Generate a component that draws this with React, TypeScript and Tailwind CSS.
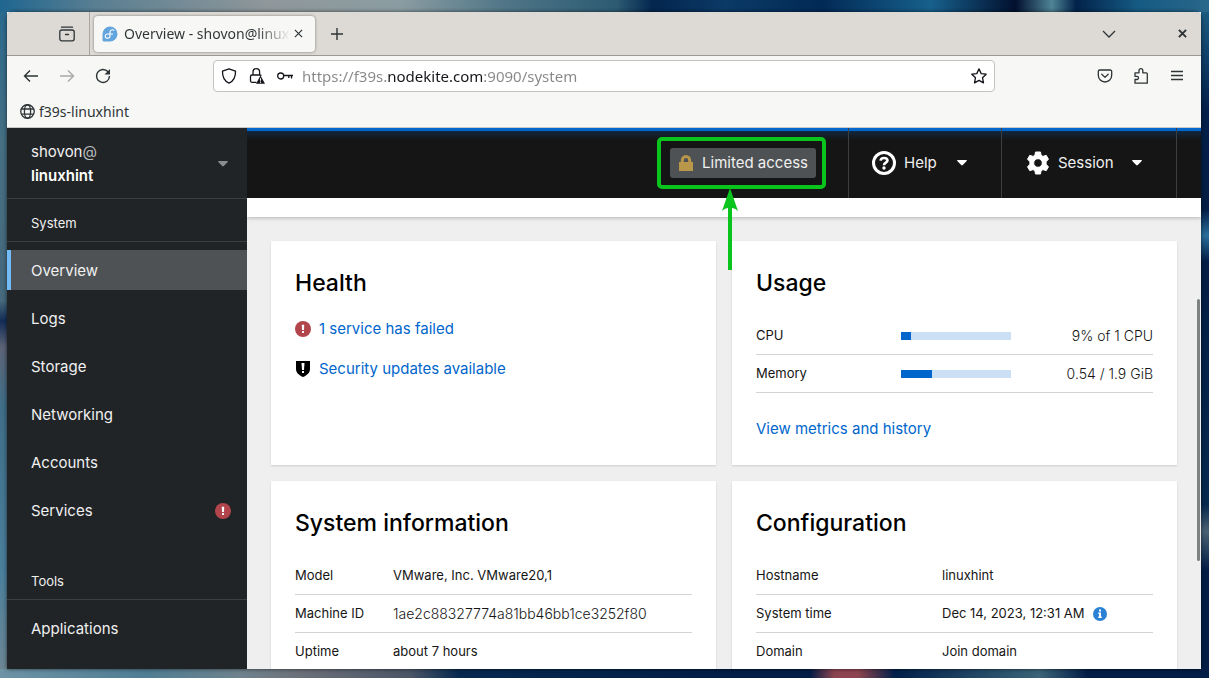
import type { ReactNode } from "react";

const navItems = ["Overview", "Logs", "Storage", "Networking", "Accounts", "Services"];

const usage = [
  { label: "CPU", percent: 9, value: "9% of 1 CPU" },
  { label: "Memory", percent: 28, value: "0.54 / 1.9 GiB" },
];

function ErrorIcon() {
  return (
    <svg viewBox="0 0 16 16" className="size-4 shrink-0" aria-hidden="true">
      <circle cx="8" cy="8" r="8" fill="#b1454b" />
      <path d="M6.8 3.8h2.4L9 9H7z" fill="#fff" />
      <rect x="7" y="10" width="2" height="2" fill="#fff" />
    </svg>
  );
}

function Caret({ className }: { className: string }) {
  return (
    <svg viewBox="0 0 10 6" className={`w-[10px] h-[6px] ${className}`} fill="currentColor" aria-hidden="true">
      <path d="M.7 0h8.6q1 .3.4 1.1L5.8 5q-.8.8-1.6 0L.3 1.1Q-.3.3.7 0z" />
    </svg>
  );
}

function TabBar() {
  return (
    <div className="flex h-11 items-center border-b border-[#9a9892] bg-[#dddad5] text-[#2e3436]">
      <div className="flex h-full w-[83px] items-center justify-end border-r border-[#a9a6a1] pr-[14px]">
        <button type="button" aria-label="Firefox View">
          <svg viewBox="0 0 16 16" className="size-4" fill="none" stroke="currentColor" strokeWidth="1.3" strokeLinecap="round">
            <path d="M2.5 1.2h11" />
            <rect x=".8" y="4" width="14.4" height="10.8" rx="2" />
            <path d="M6.5 8.5h3" />
          </svg>
        </button>
      </div>
      <div className="ml-1 flex h-9 w-[221px] items-center rounded bg-[#f7f7f5] pl-2 pr-3 shadow-[0_0_3px_rgba(0,0,0,0.45)]">
        <svg viewBox="0 0 16 16" className="size-4 shrink-0" aria-hidden="true">
          <path d="M8 .5A7.5 7.5 0 0 0 .5 8v6a1.5 1.5 0 0 0 1.5 1.5h6a7.5 7.5 0 0 0 0-15z" fill="#62a5de" />
          <path
            d="M11.8 4.2C9.8 3.2 8 4.3 8 6.3v3.4c0 3.4-4.8 3.2-4.8.4 0-1.7 1.5-2.2 2.6-2.1M5.8 8h4.7"
            fill="none"
            stroke="#fff"
            strokeWidth="1.1"
            strokeLinecap="round"
          />
        </svg>
        <span className="ml-[6px] flex-1 whitespace-nowrap bg-linear-to-r from-[#2e3436] from-80% to-transparent bg-clip-text text-sm text-transparent">
          Overview - shovon@linux
        </span>
        <button type="button" aria-label="Close tab" className="ml-1">
          <svg viewBox="0 0 10 10" className="size-[9px]" stroke="currentColor" strokeWidth="1.3">
            <path d="M1 1l8 8M9 1L1 9" />
          </svg>
        </button>
      </div>
      <button type="button" aria-label="New tab" className="ml-4">
        <svg viewBox="0 0 12 12" className="size-3" stroke="currentColor" strokeWidth="1.4">
          <path d="M6 0v12M0 6h12" />
        </svg>
      </button>
      <div className="ml-auto flex items-center gap-[62px] pr-[14px]">
        <button type="button" aria-label="List all tabs">
          <svg viewBox="0 0 14 8" className="h-2 w-[14px]" fill="none" stroke="currentColor" strokeWidth="1.3">
            <path d="M1 1l6 6 6-6" />
          </svg>
        </button>
        <button type="button" aria-label="Close window">
          <svg viewBox="0 0 10 10" className="size-[9px]" stroke="currentColor" strokeWidth="2.2">
            <path d="M1 1l8 8M9 1L1 9" />
          </svg>
        </button>
      </div>
    </div>
  );
}

function Toolbar() {
  return (
    <div className="grid grid-cols-[206px_1fr_206px] items-center pt-1 text-[#2e3436]">
      <div className="flex items-center gap-5 pl-4">
        <button type="button" aria-label="Back">
          <svg viewBox="0 0 16 16" className="size-4" fill="none" stroke="currentColor" strokeWidth="1.4">
            <path d="M15 8H2M7 2.5L1.5 8 7 13.5" />
          </svg>
        </button>
        <button type="button" aria-label="Forward" disabled className="text-[#a8a9a9]">
          <svg viewBox="0 0 16 16" className="size-4" fill="none" stroke="currentColor" strokeWidth="1.4">
            <path d="M1 8h13M9 2.5L14.5 8 9 13.5" />
          </svg>
        </button>
        <button type="button" aria-label="Reload">
          <svg viewBox="0 0 16 16" className="size-4" fill="none" stroke="currentColor" strokeWidth="1.4">
            <path d="M13 3.8A6.5 6.5 0 1 0 14.5 8" />
            <path d="M15 1v5.5H9.5z" fill="currentColor" stroke="none" />
          </svg>
        </button>
      </div>
      <div className="flex h-8 items-center rounded border border-[#c6c3be] bg-white px-[7px]">
        <svg viewBox="0 0 16 16" className="size-4 shrink-0" fill="none" stroke="#15141a" strokeWidth="1.3" strokeLinejoin="round">
          <path d="M8 .8L14.5 3.2C14.7 8.5 12.5 13 8 15.2 3.5 13 1.3 8.5 1.5 3.2z" />
        </svg>
        <svg viewBox="0 0 16 16" className="ml-3 size-4 shrink-0" fill="none" stroke="#15141a" strokeWidth="1.3">
          <path d="M4 7V4a3.3 3.3 0 0 1 6.6 0v3M7.5 14.3H3a1.5 1.5 0 0 1-1.5-1.5V8.5A1.5 1.5 0 0 1 3 7h8a1.5 1.5 0 0 1 1.3.8" />
          <path d="M11.5 7.5L16 15.8H7z" fill="#15141a" stroke="none" />
          <path d="M11.5 10.2v2.5M11.5 13.5v1.2" stroke="#fff" strokeWidth="1.1" />
        </svg>
        <svg viewBox="0 0 16 16" className="ml-3 size-4 shrink-0" fill="none" stroke="#15141a" strokeWidth="1.3">
          <circle cx="3.7" cy="8" r="3" />
          <path d="M6.7 7.5h9.3M11.8 7.5v2.5M14.5 7.5v3" />
        </svg>
        <input
          type="text"
          aria-label="Address"
          defaultValue="https://f39s.nodekite.com:9090/system"
          className="ml-[9px] min-w-0 flex-1 bg-[linear-gradient(to_right,#87878a_84px,#15141a_84px,#15141a_180px,#87878a_180px)] bg-clip-text text-[15px] text-transparent outline-none"
        />
        <button type="button" aria-label="Bookmark this page">
          <svg viewBox="0 0 16 16" className="size-4" fill="none" stroke="#15141a" strokeWidth="1.3" strokeLinejoin="round">
            <path d="M8 .9l2.2 4.7 5 .6-3.7 3.5 1 5.2L8 12.4l-4.5 2.5 1-5.2L.8 6.2l5-.6z" />
          </svg>
        </button>
      </div>
      <div className="flex items-center justify-end gap-5 pr-4">
        <button type="button" aria-label="Save to Pocket">
          <svg viewBox="0 0 16 16" className="size-4" fill="none" stroke="currentColor" strokeWidth="1.3" strokeLinejoin="round">
            <path d="M2.8 2h10.4a1.5 1.5 0 0 1 1.5 1.5V7.3a6.7 6.7 0 0 1-13.4 0V3.5A1.5 1.5 0 0 1 2.8 2z" />
            <path d="M4.8 6.3L8 9.4l3.2-3.1" strokeLinecap="round" />
          </svg>
        </button>
        <button type="button" aria-label="Extensions">
          <svg viewBox="0 0 16 16" className="size-4" fill="none" stroke="currentColor" strokeWidth="1.3" strokeLinejoin="round">
            <path d="M2 4.8h4V2.6a1.9 1.9 0 0 1 3.8 0v2.2h3.5a1 1 0 0 1 1 1v9.4H2v-3.7h1.9a1.6 1.6 0 0 0 0-3.2H2z" />
          </svg>
        </button>
        <button type="button" aria-label="Open application menu">
          <svg viewBox="0 0 16 16" className="size-4" stroke="currentColor" strokeWidth="1.3">
            <path d="M2 3.5h12M2 7.5h12M2 11.5h12" />
          </svg>
        </button>
      </div>
    </div>
  );
}

function Sidebar() {
  return (
    <nav className="w-60 shrink-0 bg-[#212427] text-[15px] text-[#f0f0f0]">
      <button
        type="button"
        className="flex h-[71px] w-full items-center justify-between border-b border-[#3c3f42] pt-0.5 pl-6 pr-[19px] text-left"
      >
        <span className="leading-6">
          shovon<span className="text-[#b8bbbe]">@</span>
          <br />
          <span className="font-semibold text-white">linuxhint</span>
        </span>
        <Caret className="text-[#8a8d90]" />
      </button>
      <h2 className="flex h-[43px] items-end border-b border-[#3c3f42] px-6 pb-2 text-[13px] leading-5">System</h2>
      <ul className="mt-2 flex flex-col gap-2">
        {navItems.map((item) => (
          <li key={item}>
            <a
              href="#"
              className={
                item === "Overview"
                  ? "flex h-10 items-center border-l-4 border-[#73bcf7] bg-[#4f5255] pt-0.5 pl-5"
                  : "flex h-10 items-center justify-between pt-0.5 pl-6 pr-4"
              }
            >
              {item}
              {item === "Services" && <ErrorIcon />}
            </a>
          </li>
        ))}
      </ul>
      <h2 className="mt-[27px] flex h-[43px] items-end border-b border-[#3c3f42] px-6 pb-2 text-[13px] leading-5">Tools</h2>
      <ul className="mt-2">
        <li>
          <a href="#" className="flex h-10 items-center px-6 pt-0.5">
            Applications
          </a>
        </li>
      </ul>
    </nav>
  );
}

function Masthead() {
  return (
    <header className="relative z-10 flex h-[70px] shrink-0 justify-end bg-[#151515] pr-6 text-[15px] text-[#f0f0f0]">
      {/* page loading bar */}
      <div className="absolute inset-x-0 top-0 h-3 border-t-[3px] border-[#0066cc] bg-linear-to-b from-[#0e2740] to-[#151515]" />
      <div className="relative mr-8 flex items-center">
        <button
          type="button"
          className="flex h-[30px] items-center gap-2 rounded-[3px] bg-[#4f5255] px-2 whitespace-nowrap"
        >
          <svg viewBox="0 0 16 16" className="size-4" aria-hidden="true">
            <path d="M1 7h1.8V5.2a5.2 5.2 0 0 1 10.4 0V7H15v9H1zm4.8 0h4.4V5.2a2.2 2.2 0 0 0-4.4 0z" fill="#b8974a" fillRule="evenodd" />
          </svg>
          Limited access
        </button>
        {/* highlight around the access button */}
        <div className="absolute -left-[13px] -right-[10px] top-[9px] h-[52px] rounded-[5px] border-4 border-[#08c41c]" />
        <svg viewBox="0 0 16 82" className="absolute left-[52px] top-[60px] h-[82px] w-4" fill="#08c41c">
          <path d="M8 0L16 23Q13 20 10 20V82H6V20Q3 20 0 23z" />
        </svg>
      </div>
      <button type="button" className="relative flex w-[153px] items-center border-l border-[#3c3f42] pl-[23px]">
        <svg viewBox="0 0 24 24" className="size-6" fill="none" stroke="#fff" strokeWidth="3">
          <circle cx="12" cy="12" r="10.5" />
          <path d="M8.6 9.6C8.8 7.8 10.2 7 12 7c2 0 3.4 1 3.4 2.6 0 2.2-3.4 2.1-3.4 4.6" strokeWidth="2.7" />
          <circle cx="12" cy="17" r="1.7" fill="#fff" stroke="none" />
        </svg>
        <span className="ml-2">Help</span>
        <Caret className="ml-auto mr-[34px] text-white" />
      </button>
      <button type="button" className="relative flex w-[176px] items-center border-x border-[#3c3f42] pl-6">
        <svg viewBox="0 0 24 24" className="size-6" fill="#fff" stroke="#fff" strokeLinejoin="round">
          <path
            fillRule="evenodd"
            d="M9.5 1h5l.6 3.3 1.9 1.1 3.2-1.1 2.3 4-2.4 2.3v2.8l2.4 2.3-2.3 4-3.2-1.1-1.9 1.1-.6 3.3h-5l-.6-3.3L7 18.600l-3.2 1.100-2.300-4 2.400-2.300v-2.800L1.500 8.300l2.300-4L7 5.400l1.900-1.100zM12 7.700a4.300 4.300 0 1 0 0 8.600 4.300 4.300 0 0 0 0-8.600z"
          />
        </svg>
        <span className="ml-2">Session</span>
        <Caret className="ml-auto mr-[34px] text-white" />
      </button>
    </header>
  );
}

function Card({ title, children }: { title: string; children: ReactNode }) {
  return (
    <section className="bg-white p-6 shadow-[0_1px_2px_rgba(0,0,0,0.15)]">
      <h2 className="mb-4 text-[23px] leading-9 font-medium text-black">{title}</h2>
      {children}
    </section>
  );
}

function Row({ label, children }: { label: string; children: ReactNode }) {
  return (
    <tr className="h-[38px] *:border-b *:border-[#d2d2d2]">
      <th scope="row" className="p-0 text-left font-normal">
        {label}
      </th>
      {children}
    </tr>
  );
}

function Overview() {
  return (
    <main className="relative flex-1 overflow-hidden bg-[#efefef]">
      <div className="mb-6 h-[19px] bg-white shadow-[0_1px_4px_rgba(0,0,0,0.25)]" />
      <div className="grid grid-cols-2 gap-4 px-6">
        <Card title="Health">
          <ul className="flex flex-col gap-4 text-[15px] leading-6 text-[#0066cc]">
            <li className="flex items-center gap-2">
              <ErrorIcon />
              <a href="#">1 service has failed</a>
            </li>
            <li className="flex items-center gap-2">
              <svg viewBox="0 0 16 16" className="size-4 shrink-0" aria-hidden="true">
                <path d="M1 0h14v8c0 4-3.5 6.5-7 8-3.5-1.5-7-4-7-8z" fill="#000" />
                <path d="M6.5 2h3L9 9H7z" fill="#fff" />
                <rect x="7" y="10" width="2" height="2" fill="#fff" />
              </svg>
              <a href="#">Security updates available</a>
            </li>
          </ul>
        </Card>

        <Card title="Usage">
          <table className="w-full table-fixed border-separate border-spacing-0 text-[13px]">
            <colgroup>
              <col className="w-[145px]" />
              <col className="w-[110px]" />
              <col />
            </colgroup>
            <tbody>
              {usage.map((row) => (
                <Row key={row.label} label={row.label}>
                  <td className="p-0">
                    <div role="progressbar" aria-label={row.label} aria-valuenow={row.percent} className="h-2 bg-[#cce0f5]">
                      <div className="h-full bg-[#0066cc]" style={{ width: `${row.percent}%` }} />
                    </div>
                  </td>
                  <td className="p-0 text-right text-sm font-light">{row.value}</td>
                </Row>
              ))}
            </tbody>
          </table>
          <a href="#" className="mt-6 block text-[15px] leading-6 text-[#0066cc]">
            View metrics and history
          </a>
        </Card>

        <Card title="System information">
          <table className="w-full table-fixed border-separate border-spacing-0 text-[13px]">
            <colgroup>
              <col className="w-[98px]" />
              <col />
            </colgroup>
            <tbody>
              <Row label="Model">
                <td className="p-0">VMware, Inc. VMware20,1</td>
              </Row>
              <Row label="Machine ID">
                <td className="p-0 text-sm font-light">1ae2c88327774a81bb46bb1ce3252f80</td>
              </Row>
              <Row label="Uptime">
                <td className="p-0">about 7 hours</td>
              </Row>
            </tbody>
          </table>
        </Card>

        <Card title="Configuration">
          <table className="w-full table-fixed border-separate border-spacing-0 text-[13px]">
            <colgroup>
              <col className="w-[186px]" />
              <col />
            </colgroup>
            <tbody>
              <Row label="Hostname">
                <td className="p-0">linuxhint</td>
              </Row>
              <Row label="System time">
                <td className="p-0">
                  <span className="flex items-center gap-2">
                    Dec 14, 2023, 12:31 AM
                    <svg viewBox="0 0 14 14" className="size-[14px]" aria-hidden="true">
                      <circle cx="7" cy="7" r="7" fill="#2b82d4" />
                      <path d="M6 2.5h2v2H6zM5.3 5.5H8v4h.7V11H5.300V9.500H6V7h-.7z" fill="#fff" />
                    </svg>
                  </span>
                </td>
              </Row>
              <Row label="Domain">
                <td className="p-0">Join domain</td>
              </Row>
            </tbody>
          </table>
        </Card>
      </div>
      {/* scrollbar thumb */}
      <div className="absolute right-px top-[101px] h-[262px] w-[3px] rounded-full bg-[#7f8283]" />
    </main>
  );
}

export default function App() {
  return (
    <div className="relative h-screen overflow-hidden pt-3 pr-2 pb-[9px] pl-[7px]">
      {/* desktop wallpaper */}
      <div className="absolute inset-0 flex flex-col">
        <div className="h-3 bg-[linear-gradient(90deg,#1f6690_0%,#5a7f92_8%,#8f979a_22%,#8b9da2_33%,#4f7587_42%,#2c5b72_51%,#04264f_54%,#0b3a66_60%,#022a56_68%,#17608c_77%,#02102e_84%,#4f8496_87%,#02224a_89%,#155a82_94%,#2a678b_100%)]" />
        <div className="flex flex-1 justify-between">
          <div className="w-[7px] bg-[linear-gradient(180deg,#2a6a8e_0%,#466f83_20%,#46697c_44%,#132c56_47%,#5c6376_51%,#3f6e88_60%,#4a7f9c_85%,#6c8694_100%)]" />
          <div className="w-2 bg-[linear-gradient(180deg,#1c5a80_0%,#03204a_15%,#021d46_30%,#2a6f9c_34%,#021d46_38%,#06294f_75%,#4a6275_79%,#021d46_85%,#021d46_100%)]" />
        </div>
        <div className="h-[9px] bg-[linear-gradient(90deg,#6d93a5_0%,#4f7d93_12%,#6f828d_20%,#6b6f78_25%,#4a5566_34%,#06284f_38%,#021d46_60%,#021d46_67%,#8c4450_69%,#8c4450_71%,#02204a_74%,#3a6478_86%,#021d46_90%,#021d46_100%)]" />
      </div>

      <div className="relative flex h-full flex-col overflow-hidden rounded-t-lg bg-[#f7f7f5] shadow-[0_0_4px_rgba(0,0,0,0.6)]">
        <div className="shrink-0 border-b border-[#c9c7c3] font-['Noto_Sans',sans-serif]">
          <TabBar />
          <Toolbar />
          <div className="flex h-[35px] items-center px-[13px] pt-1 text-sm text-[#2e3436]">
            <a href="#" className="flex items-center gap-1">
              <svg viewBox="0 0 16 16" className="size-[15px]" fill="none" stroke="currentColor" strokeWidth="1.4">
                <circle cx="8" cy="8" r="7.2" />
                <ellipse cx="8" cy="8" rx="3.3" ry="7.2" />
                <path d="M1.5 5.3h13M1.5 10.7h13" />
              </svg>
              f39s-linuxhint
            </a>
          </div>
        </div>
        <div className="flex min-h-0 flex-1 font-[Inter,sans-serif] text-[#151515]">
          <Sidebar />
          <div className="flex min-w-0 flex-1 flex-col">
            <Masthead />
            <Overview />
          </div>
        </div>
      </div>
    </div>
  );
}
